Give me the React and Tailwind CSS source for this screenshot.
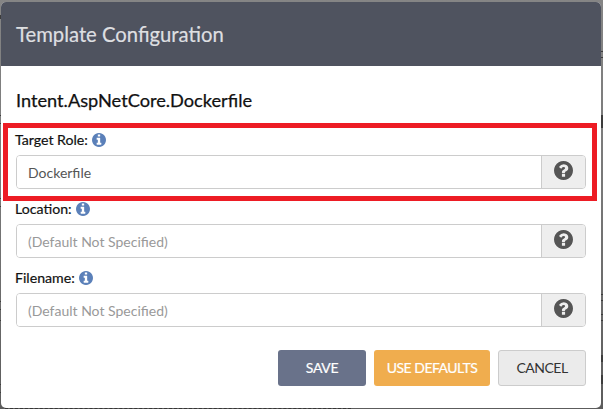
const CIRCLE = "M1664 896q0 209-103 385.5t-279.5 279.5-385.5 103-385.5-103-279.5-279.5-103-385.5 103-385.5 279.5-279.5 385.5-103 385.5 103 279.5 279.5 103 385.5z";
const INFO = "M1152 1376v-160q0-14-9-23t-23-9h-96v-512q0-14-9-23t-23-9h-320q-14 0-23 9t-9 23v160q0 14 9 23t23 9h96v320h-96q-14 0-23 9t-9 23v160q0 14 9 23t23 9h448q14 0 23-9t9-23zm-128-896v-160q0-14-9-23t-23-9h-192q-14 0-23 9t-9 23v160q0 14 9 23t23 9h192q14 0 23-9t9-23z";
const QUESTION = "M1024 1376v-192q0-14-9-23t-23-9h-192q-14 0-23 9t-9 23v192q0 14 9 23t23 9h192q14 0 23-9t9-23zm256-672q0-88-55.5-163t-138.5-116-170-41q-243 0-371 213-15 24 8 42l132 100q7 6 19 6 16 0 25-12 53-68 86-92 34-24 86-24 48 0 85.5 26t37.5 59q0 38-20 61t-68 45q-63 28-115.5 86.5t-52.5 125.5v36q0 14 9 23t23 9h192q14 0 23-9t9-23q0-19 21.5-49.5t54.5-49.5q32-18 49-28.5t46-35 44.5-48 28-60.5 12.5-81z";

// Page content peeking out past the dialog's edges: [top, height]
const LEFT_MARKS = [[15, 4], [115, 1], [123, 1], [198, 1], [206, 1], [301, 1], [309, 1], [320, 1], [384, 1], [392, 1]];
const RIGHT_MARKS = [[51, 1], [57, 1], [115, 13], [294, 1], [300, 1], [314, 1], [320, 1], [355, 7], [375, 9]];

function CircleIcon({ glyph, className }) {
  return (
    <svg viewBox="128 128 1536 1536" className={className} fill="currentColor" fillRule="evenodd" aria-hidden="true">
      <path d={glyph + CIRCLE} />
    </svg>
  );
}

function Field({ label, value }) {
  return (
    <div className="h-[69px]">
      <div className="flex h-[25px] items-start text-[14.15px] leading-5 text-[#111] [-webkit-text-stroke:0.2px_#111]">
        <span className="-ml-px">{label}</span>
        <CircleIcon glyph={INFO} className="ml-[4.5px] mt-[3px] size-[14px] text-[#5b80b9]" />
      </div>
      <div className="flex h-[34px] overflow-hidden rounded border border-[#ccc]">
        <input
          className="min-w-0 flex-1 bg-white pl-[11px] pr-3 pt-px text-[14px] text-[#555] outline-none placeholder:text-[#999]"
          defaultValue={value}
          placeholder="(Default Not Specified)"
        />
        <button className="flex w-11 justify-center border-l border-[#ccc] bg-[#eee] pt-[5px]">
          <CircleIcon glyph={QUESTION} className="size-[19px] text-[#555]" />
        </button>
      </div>
    </div>
  );
}

export default function App() {
  return (
    <div className="relative h-[409px] w-[603px] overflow-hidden bg-linear-to-b from-[#858585] via-[#777] to-[#5c5c5c] pl-px pt-[2px] font-['Lato',sans-serif]">
      {LEFT_MARKS.map(([top, height]) => (
        <div key={top} className="absolute left-0 w-px bg-[#3c3c3c]" style={{ top, height }} />
      ))}
      {RIGHT_MARKS.map(([top, height]) => (
        <div key={top} className="absolute right-0 w-[2px] bg-[#3c3c3c]" style={{ top, height }} />
      ))}
      <div className="absolute bottom-0 left-[5px] w-[346px] border-t border-dashed border-[#363636]" />
      <div className="relative h-[406px] w-[600px] overflow-hidden rounded-[5px] bg-white">
        <header className="flex h-16 items-center bg-[#4f535f] px-[15px] text-[20.25px] text-[#dedfe1] [-webkit-text-stroke:0.2px_#dedfe1]">
          Template Configuration
        </header>
        <main className="px-[15px] pt-[23px]">
          <h2 className="mb-[18px] text-[18.2px] leading-[23px] text-[#111] [-webkit-text-stroke:0.25px_#111]">
            Intent.AspNetCore.Dockerfile
          </h2>
          <Field label="Target Role:" value="Dockerfile" />
          <Field label="Location:" />
          <Field label="Filename:" />
        </main>
        <footer className="mt-[13px] flex justify-end gap-2 px-[15px] text-[14px]">
          <button className="h-9 w-[88px] rounded-[3px] bg-[#69728a] pb-[2px] tracking-[-0.35px] text-white [-webkit-text-stroke:0.2px_#fff]">SAVE</button>
          <button className="h-9 w-[116px] rounded-[3px] bg-[#f0ad4e] pb-[2px] tracking-[-0.5px] text-white [-webkit-text-stroke:0.2px_#fff]">USE DEFAULTS</button>
          <button className="h-9 w-[88px] rounded-[3px] border border-[#ccc] bg-[#ebebeb] pb-[2px] tracking-[-0.5px] text-[#333]">CANCEL</button>
        </footer>
        <div className="pointer-events-none absolute left-[2px] top-[121px] h-[78px] w-[594px] border-[5px] border-[#ed1c24]" />
      </div>
    </div>
  );
}
